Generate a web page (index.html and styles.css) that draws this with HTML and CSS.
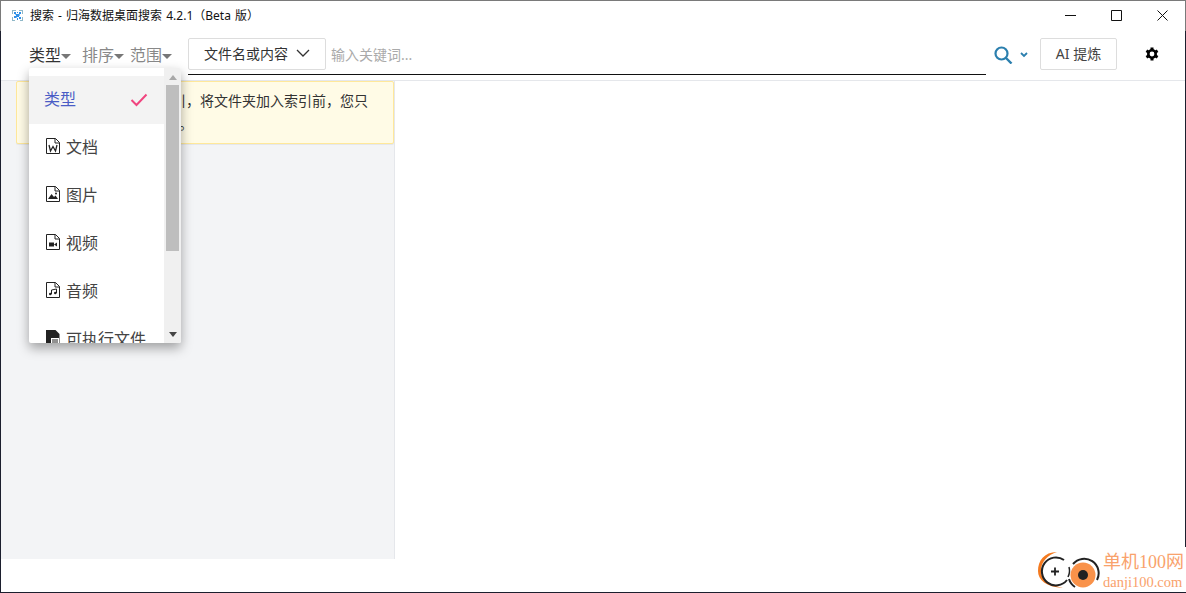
FILE: index.html
```html
<!DOCTYPE html>
<html lang="zh-CN">
<head>
  <meta charset="utf-8">
  <title>搜索 - 归海数据桌面搜索</title>
  <link rel="stylesheet" href="styles.css">
</head>
<body>
  <div class="window">
    <div class="titlebar">
      <svg class="app-icon" width="11" height="11" viewBox="0 0 11 11">
        <path d="M0 0h4v1H1v3H0zM7 0h4v4h-1V1H7zM0 7h1v3h2v1H0zM10 7h1v4H8v-1h2z" fill="#8fb8c8"/>
        <path d="M2 2h2v2H2zM5 2h1v1H5zM7 2h2v2H7zM4 4h3v3H4zM2 6h2v2H2zM7 7h2v2H7zM5 8h1v2H5z" fill="#2f8fe8"/>
        <path d="M3 4h1v1H3zM7 4h1v2H7zM4 7h1v1H4z" fill="#7fc0f0"/>
      </svg>
      <span class="title">搜索 - 归海数据桌面搜索 4.2.1（Beta 版）</span>
      <div class="win-controls">
        <svg width="11" height="11" viewBox="0 0 11 11"><path d="M0 5.500h11" stroke="#111" fill="none"/></svg>
        <svg width="11" height="11" viewBox="0 0 11 11"><path d="M.5.500h10v10H.5z" stroke="#111" fill="none"/></svg>
        <svg width="11" height="11" viewBox="0 0 11 11"><path d="M.5.500l10 10M10.500.500l-10 10" stroke="#111" fill="none"/></svg>
      </div>
    </div>

    <div class="window-body">
      <div class="toolbar">
        <div class="filters">
          <span class="filter active">类型<i class="caret"></i></span>
          <span class="filter">排序<i class="caret"></i></span>
          <span class="filter">范围<i class="caret"></i></span>
        </div>
        <div class="search-box">
          <button class="mode-btn">文件名或内容
            <svg width="14" height="8" viewBox="0 0 14 8"><path d="M1 1l6 6 6-6" stroke="#333" stroke-width="1.300" fill="none"/></svg>
          </button>
          <span class="placeholder">输入关键词...</span>
        </div>
        <div class="search-go">
          <svg width="19" height="18" viewBox="0 0 19 18"><circle cx="7.500" cy="7.500" r="6" stroke="#2b7fae" stroke-width="2.200" fill="none"/><path d="M12 12l5.500 5.500" stroke="#2b7fae" stroke-width="2.400" fill="none"/></svg>
          <svg width="8" height="6" viewBox="0 0 8 6"><path d="M1 1l3 3 3-3" stroke="#2b7fae" stroke-width="1.800" fill="none"/></svg>
        </div>
        <button class="ai-btn">AI 提炼</button>
        <svg class="gear" width="14" height="14" viewBox="0 0 14 14">
          <path d="M7 .500v13M1.400 3.750l11.200 6.500M1.400 10.250l11.200-6.500" stroke="#000" stroke-width="3"/>
          <circle cx="7" cy="7" r="3.700" fill="#fff" stroke="#000" stroke-width="2.600"/>
        </svg>
      </div>

      <div class="content">
        <aside class="sidebar">
          <div class="notice">
            <p>首次使用请先添加索引，将文件夹加入索引前，您只</p>
            <p class="notice-rest">能搜索文件名和路径。</p>
          </div>
        </aside>
        <main class="results"></main>
      </div>

      <div class="statusbar"></div>
    </div>
  </div>

  <div class="menu">
    <div class="menu-list">
      <div class="menu-item selected">
        <span>类型</span>
        <svg class="check" width="18" height="14" viewBox="0 0 18 14"><path d="M1.500 7l5 5L16.500 1.500" stroke="#f0457f" stroke-width="2" fill="none"/></svg>
      </div>
      <div class="menu-item">
        <svg class="file-icon" width="14" height="16" viewBox="0 0 14 16"><path d="M.5.500h9l4 4v11H.5z" stroke="#222" fill="#fff"/><path d="M9 .500v4.500h4.500" stroke="#222" fill="none"/><path d="M3 7l1.500 6L7 8.500 9.500 13 11 7" stroke="#222" stroke-width="1.300" fill="none"/></svg>
        <span>文档</span>
      </div>
      <div class="menu-item">
        <svg class="file-icon" width="14" height="16" viewBox="0 0 14 16"><path d="M.5.500h9l4 4v11H.5z" stroke="#222" fill="#fff"/><path d="M9 .500v4.500h4.500" stroke="#222" fill="none"/><path d="M2 13l3.500-5 2.500 3 1.500-1.500L12 13z" fill="#222"/><circle cx="10" cy="7.500" r="1" fill="#222"/></svg>
        <span>图片</span>
      </div>
      <div class="menu-item">
        <svg class="file-icon" width="14" height="16" viewBox="0 0 14 16"><path d="M.5.500h9l4 4v11H.5z" stroke="#222" fill="#fff"/><path d="M9 .500v4.500h4.500" stroke="#222" fill="none"/><path d="M3 8.500h5v4H3zM8 10.500l3-2v4z" fill="#222"/></svg>
        <span>视频</span>
      </div>
      <div class="menu-item">
        <svg class="file-icon" width="14" height="16" viewBox="0 0 14 16"><path d="M.5.500h9l4 4v11H.5z" stroke="#222" fill="#fff"/><path d="M9 .500v4.500h4.500" stroke="#222" fill="none"/><path d="M5.500 12V8l5-1v4" stroke="#222" fill="none"/><circle cx="4.300" cy="12" r="1.300" fill="#222"/><circle cx="9.300" cy="11" r="1.300" fill="#222"/></svg>
        <span>音频</span>
      </div>
      <div class="menu-item">
        <svg class="file-icon" width="14" height="16" viewBox="0 0 14 16"><path d="M0 0h9.500l4 4v12H0z" fill="#222"/><path d="M5 8h8v6H5z" fill="#fff"/><path d="M6 10h6M6 12h6" stroke="#222"/></svg>
        <span>可执行文件</span>
      </div>
    </div>
    <div class="scrollbar">
      <i class="arrow up"></i>
      <div class="thumb"></div>
      <i class="arrow down"></i>
    </div>
  </div>

  <div class="watermark">
    <svg width="64" height="45" viewBox="0 0 64 45">
      <path d="M21 5C8 5 2 14 2 24c0 9 8 16 25 17C14 38 5 33 5 24 5 14 12 8 21 5z" fill="#f47a1f"/>
      <path d="M28 13A14 14 0 1 0 31 33" stroke="#222" stroke-width="2" fill="none"/>
      <path d="M33 20a14 14 0 0 1-1 10" stroke="#222" stroke-width="1.500" fill="none"/>
      <path d="M15 24.500h8M19 20.500v8" stroke="#222" stroke-width="1.800"/>
      <circle cx="47" cy="28" r="12.500" fill="#f9924a"/>
      <path d="M37 17A14.500 14.500 0 0 1 61 33M33 32a14.500 14.500 0 0 0 6 8" stroke="#222" stroke-width="2" fill="none"/>
      <circle cx="47" cy="28" r="5" fill="#222"/>
    </svg>
    <div class="wm-text">
      <div class="wm-cn">单机100网</div>
      <div class="wm-en">danji100.com</div>
    </div>
  </div>
</body>
</html>
```

FILE: styles.css
```css
* {
    box-sizing: border-box;
}
html, body {
    margin: 0;
    height: 100%;
    overflow: hidden;
}
body {
    background-color: #fff;
    color: #333;
    font-family: "Noto Sans", "Noto Sans CJK SC", sans-serif;
    font-size: 14px;
}
.window {
    height: 593px;
    display: flex;
    flex-direction: column;
    border-top: 1px solid #7a7a7a;
}
.titlebar {
    height: 30px;
    flex: none;
    display: flex;
    align-items: center;
    padding: 0 17px 2px 11px;
    border-left: 1px solid #7a7a7a;
    border-right: 1px solid #7a7a7a;
}
.app-icon {
    margin-right: 7px;
}
.title {
    font-size: 12px;
    word-spacing: 1px;
    color: #111;
}
.win-controls {
    margin-left: auto;
    display: flex;
    gap: 35px;
}
.window-body {
    flex: 1;
    display: flex;
    flex-direction: column;
    border-left: 1px solid #1c1f2e;
    border-right: 1px solid #1c1f2e;
    border-bottom: 1px solid #1c1f2e;
}
.toolbar {
    height: 50px;
    flex: none;
    display: flex;
    align-items: flex-start;
    border-bottom: 1px solid #e5e7eb;
    padding: 7px 0 0 28px;
}
.filters {
    display: flex;
    width: 159px;
    padding-top: 6px;
}
.filter {
    display: flex;
    align-items: center;
    margin-right: 6px;
    font-size: 16px;
    line-height: 22px;
    color: #888;
}
.filter.active {
    margin-right: 11px;
    color: #333;
}
.caret {
    width: 0;
    height: 0;
    margin-top: 2px;
    border-left: 5px solid transparent;
    border-right: 5px solid transparent;
    border-top: 5px solid #777;
}
.search-box {
    width: 798px;
    height: 37px;
    display: flex;
    align-items: flex-start;
    border-bottom: 1px solid #111;
}
.mode-btn {
    width: 138px;
    height: 32px;
    display: flex;
    align-items: center;
    justify-content: center;
    gap: 8px;
    padding: 0 0 2px;
    border: 1px solid #ddd;
    border-radius: 2px;
    background-color: #fff;
    color: #333;
    font: inherit;
    font-size: 14px;
}
.placeholder {
    margin-left: 5px;
    line-height: 33px;
    font-size: 14px;
    color: #aaa;
}
.search-go {
    display: flex;
    align-items: center;
    gap: 7px;
    width: 54px;
    height: 32px;
    padding: 2px 0 0 8px;
}
.ai-btn {
    width: 77px;
    height: 32px;
    padding: 0 0 2px;
    border: 1px solid #ddd;
    border-radius: 2px;
    background-color: #fff;
    color: #444;
    font: inherit;
    font-size: 14px;
}
.gear {
    margin: 9px 0 0 28px;
}
.content {
    height: 478px;
    flex: none;
    display: flex;
}
.sidebar {
    width: 394px;
    flex: none;
    padding-left: 15px;
    background-color: #f3f4f6;
    border-right: 1px solid #e5e7eb;
}
.notice {
    height: 63px;
    padding: 7px 16px 0 29px;
    background-color: #fffbe6;
    border: 1px solid #ffe89a;
    border-radius: 2px;
    font-size: 14px;
    line-height: 23px;
    color: #333;
    box-shadow: 0 1px 0 #e5e7eb;
}
.notice p {
    margin: 0;
    white-space: nowrap;
}
.notice-rest {
    text-indent: 7px;
}
.results {
    flex: 1;
}
.statusbar {
    flex: 1;
}

/* dropdown over the sidebar */
.menu {
    position: absolute;
    left: 29px;
    top: 68px;
    width: 152px;
    height: 275px;
    display: flex;
    background-color: #fff;
    border-radius: 2px;
    overflow: hidden;
    box-shadow: 0 5px 12px rgba(0, 0, 0, 0.35);
}
.menu-list {
    width: 135px;
    padding-top: 8px;
    overflow: hidden;
}
.menu-item {
    height: 48px;
    display: flex;
    align-items: center;
    gap: 6px;
    padding: 0 0 4px 15px;
    font-size: 16px;
    color: #444;
    white-space: nowrap;
}
.file-icon {
    margin-left: 2px;
}
.menu-item.selected {
    justify-content: space-between;
    padding-right: 16px;
    background-color: #f3f3f3;
    color: #4a5cc5;
}
.check {
    margin-top: 4px;
}
.scrollbar {
    width: 17px;
    background-color: #f0f0f0;
    display: flex;
    flex-direction: column;
    align-items: center;
}
.arrow {
    width: 0;
    height: 0;
    border-left: 4px solid transparent;
    border-right: 4px solid transparent;
}
.arrow.up {
    margin: 7px 0 5px;
    border-bottom: 5px solid #a8a8a8;
}
.arrow.down {
    margin-top: 81px;
    border-top: 5px solid #444;
}
.thumb {
    width: 13px;
    height: 166px;
    background-color: #bebebe;
}

.watermark {
    position: absolute;
    right: 0;
    bottom: 1px;
    width: 150px;
    height: 45px;
    display: flex;
    gap: 3px;
    background-color: #fff;
}
.wm-text {
    padding-top: 4px;
    color: #f9a26c;
    font-family: "Liberation Serif", "Noto Sans CJK SC", serif;
    white-space: nowrap;
}
.wm-cn {
    font-size: 18px;
    line-height: 23px;
}
.wm-en {
    font-size: 14.500px;
    line-height: 17px;
}
```
